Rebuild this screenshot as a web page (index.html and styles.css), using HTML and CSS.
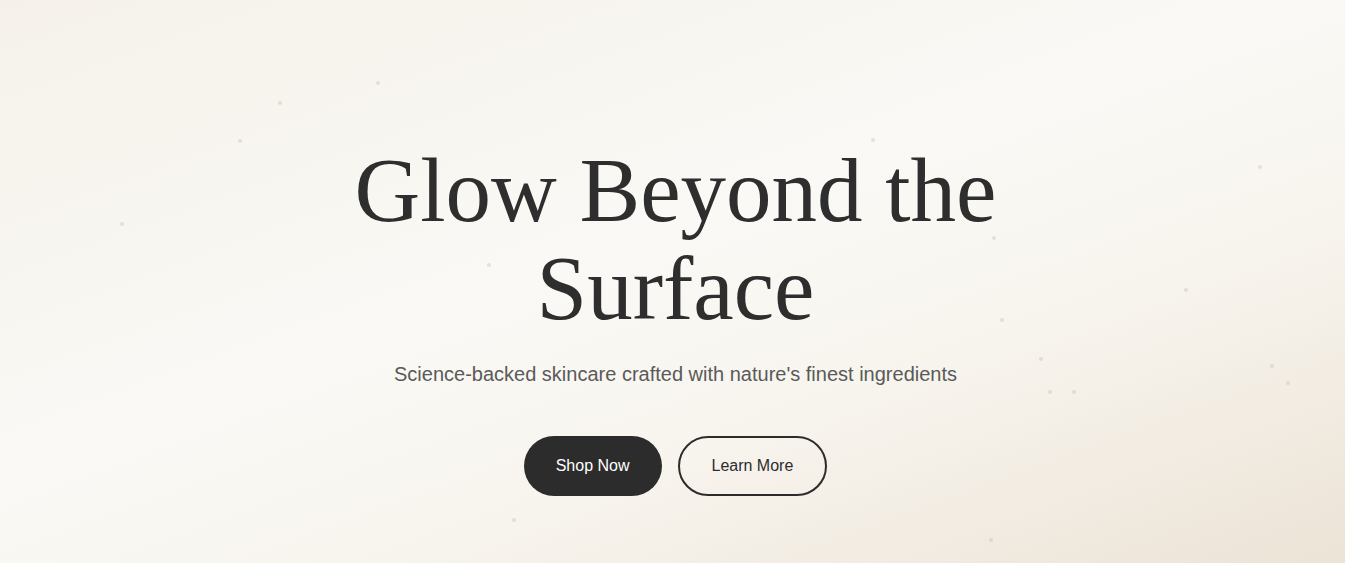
FILE: index.html
```html
<!DOCTYPE html>
<html lang="en">
<head>
<meta charset="utf-8">
<title>Glow Beyond the Surface</title>
<link rel="stylesheet" href="styles.css">
</head>
<body>
<section class="hero">
  <div class="particles" aria-hidden="true">
    <span class="dot" style="left:376px;top:81px"></span>
    <span class="dot" style="left:278px;top:101px"></span>
    <span class="dot" style="left:238px;top:139px"></span>
    <span class="dot" style="left:120px;top:222px"></span>
    <span class="dot" style="left:487px;top:263px"></span>
    <span class="dot" style="left:871px;top:138px"></span>
    <span class="dot" style="left:992px;top:236px"></span>
    <span class="dot" style="left:1258px;top:165px"></span>
    <span class="dot" style="left:1184px;top:288px"></span>
    <span class="dot" style="left:1000px;top:318px"></span>
    <span class="dot" style="left:1039px;top:357px"></span>
    <span class="dot" style="left:1048px;top:390px"></span>
    <span class="dot" style="left:1072px;top:390px"></span>
    <span class="dot" style="left:1270px;top:364px"></span>
    <span class="dot" style="left:1286px;top:381px"></span>
    <span class="dot" style="left:512px;top:518px"></span>
    <span class="dot" style="left:989px;top:538px"></span>
  </div>
  <div class="hero-content">
    <h1 class="hero-title">Glow Beyond the Surface</h1>
    <p class="hero-subtitle">Science-backed skincare crafted with nature's finest ingredients</p>
    <div class="hero-actions">
      <a class="btn btn-primary" href="#">Shop Now</a>
      <a class="btn btn-outline" href="#">Learn More</a>
    </div>
  </div>
</section>
</body>
</html>
```
FILE: styles.css
```css
* { box-sizing: border-box; }
html, body { margin: 0; padding: 0; }
body {
  font-family: "Liberation Sans", Arial, sans-serif;
  color: #2c2c2c;
  overflow: hidden;
}
.hero {
  position: relative;
  height: 563px;
  background: linear-gradient(160deg, #f5f1ea 0%, #faf9f5 45%, #f8f5ef 65%, #ece3d6 100%);
  overflow: hidden;
}
.particles {
  position: absolute;
  inset: 0;
  pointer-events: none;
}
.dot {
  position: absolute;
  width: 4px;
  height: 4px;
  border-radius: 50%;
  background: rgba(205, 175, 155, 0.35);
}
.hero-content {
  position: relative;
  display: flex;
  flex-direction: column;
  align-items: center;
  text-align: center;
  padding-top: 142px;
  padding-left: 6px;
}
.hero-title {
  margin: 0;
  max-width: 820px;
  font-family: "Liberation Serif", "Times New Roman", serif;
  font-weight: 400;
  font-size: 91px;
  line-height: 98px;
  color: #2e2e2e;
}
.hero-subtitle {
  margin: 20px 0 0;
  font-size: 20px;
  line-height: 32px;
  color: #5a5a5a;
}
.hero-actions {
  display: flex;
  gap: 16px;
  margin-top: 46px;
}
.btn {
  display: inline-flex;
  align-items: center;
  justify-content: center;
  height: 60px;
  padding: 0 32px;
  border-radius: 30px;
  font-size: 16px;
  text-decoration: none;
}
.btn-primary {
  background: #2c2c2c;
  color: #ffffff;
}
.btn-outline {
  background: transparent;
  border: 2px solid #2c2c2c;
  color: #2c2c2c;
}
```
